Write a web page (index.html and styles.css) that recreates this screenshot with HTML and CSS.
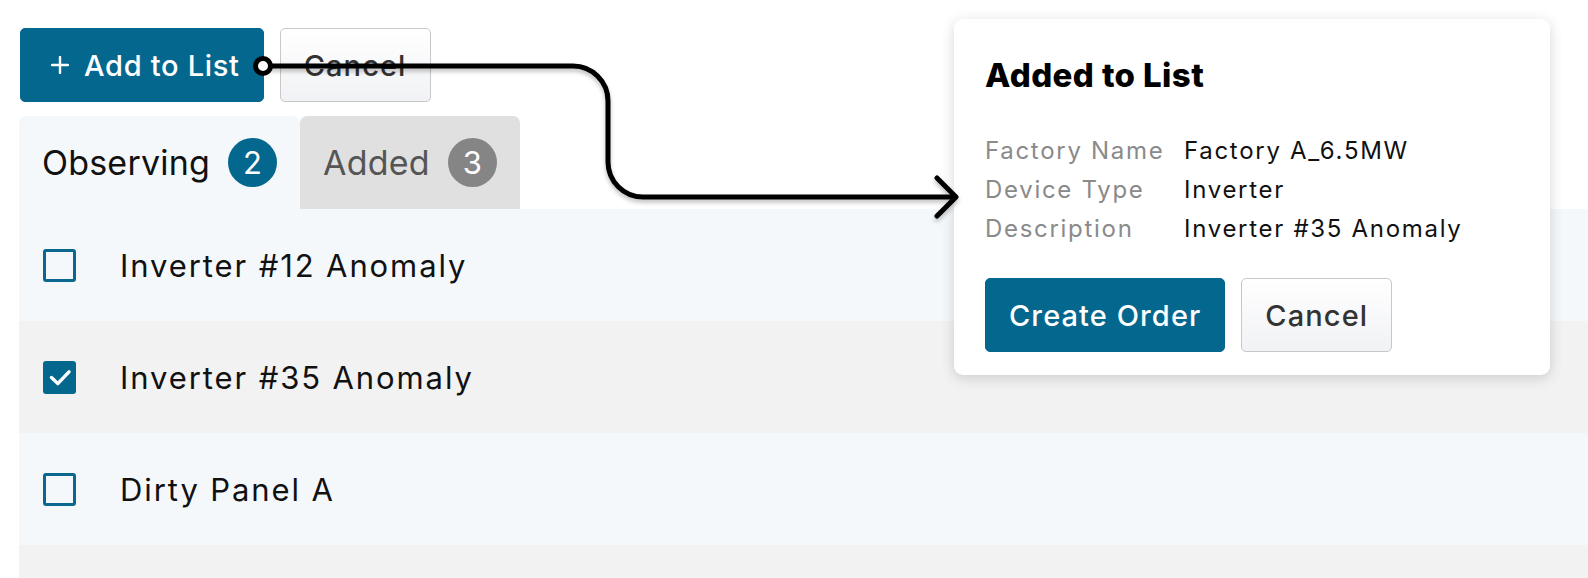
FILE: index.html
```html
<!DOCTYPE html>
<html lang="en">
<head>
<meta charset="utf-8">
<title>Added to List</title>
<link rel="stylesheet" href="styles.css">
</head>
<body>
<div class="page">
  <div class="toolbar">
    <button class="btn btn-primary">
      <svg class="plus-icon" width="18" height="18" viewBox="0 0 18 18"><path d="M9 1V17M1 9H17" stroke="#fff" stroke-width="2.4" stroke-linecap="round"/></svg>
      <span>Add to List</span>
    </button>
    <button class="btn btn-secondary">Cancel</button>
  </div>

  <div class="tabs">
    <div class="tab tab-active"><span>Observing</span><span class="badge">2</span></div>
    <div class="tab tab-inactive"><span>Added</span><span class="badge badge-gray">3</span></div>
  </div>

  <ul class="list">
    <li class="row row-light">
      <span class="checkbox"></span>
      <span class="row-label">Inverter #12 Anomaly</span>
    </li>
    <li class="row row-gray">
      <span class="checkbox checkbox-checked">
        <svg width="27" height="27" viewBox="0 0 27 27"><path d="M5.5 13.5L11.8 19.6L23 7.8" fill="none" stroke="#fff" stroke-width="3.4" stroke-linecap="round" stroke-linejoin="round"/></svg>
      </span>
      <span class="row-label">Inverter #35 Anomaly</span>
    </li>
    <li class="row row-light">
      <span class="checkbox"></span>
      <span class="row-label">Dirty Panel A</span>
    </li>
    <li class="row row-gray"></li>
  </ul>

  <div class="popup">
    <h2 class="popup-title">Added to List</h2>
    <dl class="info">
      <dt>Factory Name</dt><dd>Factory A_6.5MW</dd>
      <dt>Device Type</dt><dd>Inverter</dd>
      <dt>Description</dt><dd>Inverter #35 Anomaly</dd>
    </dl>
    <div class="popup-actions">
      <button class="btn btn-primary">Create Order</button>
      <button class="btn btn-secondary">Cancel</button>
    </div>
  </div>

  <svg class="connector" width="1588" height="578" viewBox="0 0 1588 578">
    <g class="connector-lines" fill="none" stroke="#000" stroke-width="5" stroke-linecap="round" stroke-linejoin="round">
      <path d="M263 66H573A35 35 0 0 1 608 101V162A35 35 0 0 0 643 197H955"/>
      <path d="M937 178L956 197L937 216"/>
    </g>
    <circle cx="263" cy="66" r="7.5" fill="#fff" stroke="#000" stroke-width="5"/>
  </svg>
</div>
</body>
</html>
```

FILE: styles.css
```css
* {
  box-sizing: border-box;
}

html,
body {
  margin: 0;
  padding: 0;
  overflow: hidden;
  background: #ffffff;
}

body {
  font-family: "Inter", "Noto Sans", "Liberation Sans", sans-serif;
  color: #111111;
}

.page {
  position: relative;
  width: 1588px;
  height: 578px;
  overflow: hidden;
}

/* Buttons */
.btn {
  font-family: inherit;
  font-size: 29px;
  font-weight: 500;
  height: 74px;
  padding: 0 23px;
  border-radius: 5px;
  display: inline-flex;
  align-items: center;
  justify-content: center;
  cursor: pointer;
  letter-spacing: 1.1px;
}

.btn-primary {
  background: #04678e;
  border: 1px solid #04678e;
  color: #ffffff;
}

.btn-secondary {
  background: linear-gradient(#ffffff, #f1f2f5);
  border: 1.5px solid #c8c8c8;
  color: #333333;
}

.toolbar .btn-primary {
  letter-spacing: 0.7px;
}

.plus-icon {
  margin-left: 7px;
  margin-right: 15px;
  flex: none;
}

.toolbar {
  display: flex;
  gap: 16px;
  padding: 28px 0 0 20px;
}

/* Tabs */
.tabs {
  display: flex;
  margin: 14px 0 0 19px;
}

.tab {
  height: 93px;
  padding: 0 23px;
  display: flex;
  align-items: center;
  gap: 18px;
  font-size: 34px;
  letter-spacing: 0.2px;
  border-radius: 7px 7px 0 0;
}

.tab-active {
  background: #f5f8fb;
  color: #111111;
}

.tab-inactive {
  background: #e0e0e0;
  color: #555555;
}

.badge {
  width: 49px;
  height: 49px;
  border-radius: 50%;
  background: #04678e;
  color: #ffffff;
  display: flex;
  align-items: center;
  justify-content: center;
  font-size: 31px;
  letter-spacing: 0;
}

.badge-gray {
  background: #858585;
}

/* List */
.list {
  list-style: none;
  margin: 0 0 0 19px;
  padding: 0;
}

.row {
  height: 112px;
  display: flex;
  align-items: center;
  gap: 44px;
  padding-left: 24px;
}

.row-light {
  background: #f5f8fb;
}

.row-gray {
  background: #f2f2f2;
}

.checkbox {
  width: 33px;
  height: 33px;
  border: 3px solid #0a6790;
  border-radius: 3px;
  display: flex;
  align-items: center;
  justify-content: center;
  flex: none;
}

.checkbox-checked {
  background: #04678e;
  border-color: #04678e;
}

.row-label {
  font-size: 31px;
  letter-spacing: 1.9px;
  color: #111111;
}

/* Popup */
.popup {
  position: absolute;
  left: 954px;
  top: 19px;
  width: 596px;
  height: 356px;
  background: #ffffff;
  border-radius: 9px;
  box-shadow: 0 3px 14px rgba(0, 0, 0, 0.16);
  padding: 36px 31px 22px;
}

.popup-title {
  margin: 0;
  font-size: 33px;
  line-height: 40px;
  font-weight: 800;
  letter-spacing: 0.4px;
  color: #000000;
}

.info {
  display: grid;
  grid-template-columns: 199px auto;
  margin: 36px 0 0;
  font-size: 24px;
  line-height: 39px;
  letter-spacing: 1.7px;
}

.info dt {
  color: #8a8a8a;
}

.info dd {
  margin: 0;
  color: #111111;
}

.popup-actions {
  display: flex;
  gap: 16px;
  margin-top: 30px;
}

/* Connector */
.connector {
  position: absolute;
  left: 0;
  top: 0;
  pointer-events: none;
}

.connector-lines {
  filter: drop-shadow(0 3px 2px rgba(0, 0, 0, 0.25));
}
```
